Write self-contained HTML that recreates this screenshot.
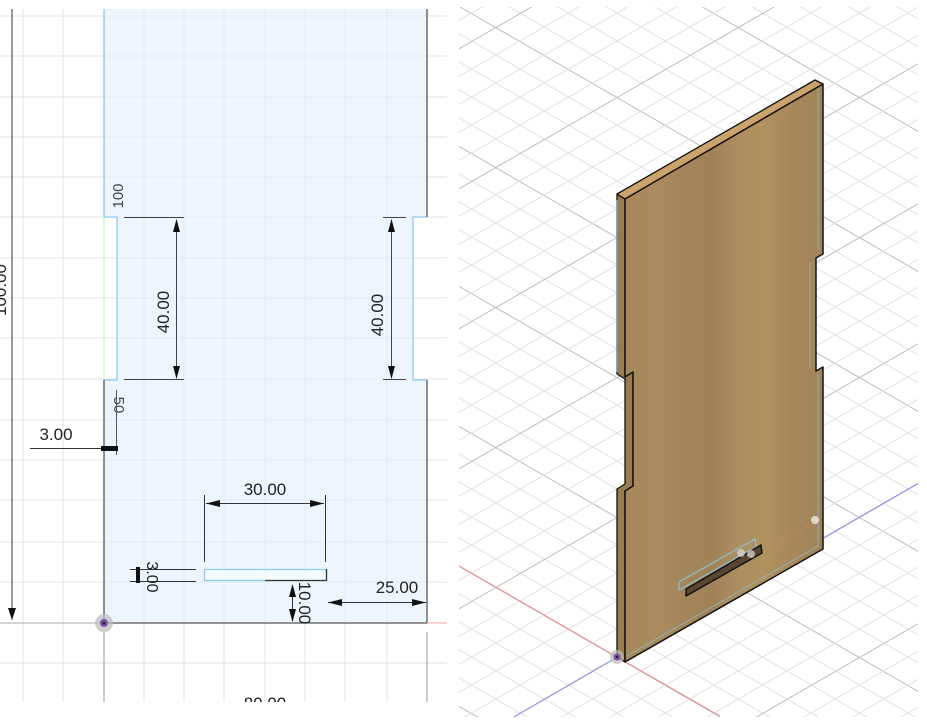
<!DOCTYPE html>
<html><head><meta charset="utf-8"><style>
html,body{margin:0;padding:0;background:#fff;width:927px;height:727px;overflow:hidden;}
svg{display:block;}
text{font-family:"Liberation Sans",sans-serif;fill:#222;}
</style></head><body>
<svg width="927" height="727" viewBox="0 0 927 727" xmlns="http://www.w3.org/2000/svg">
<defs>
  <linearGradient id="wood" x1="0" x2="1" y1="0" y2="0">
    <stop offset="0" stop-color="#a58759"/>
    <stop offset="0.15" stop-color="#a98b5d"/>
    <stop offset="0.3" stop-color="#a3855a"/>
    <stop offset="0.45" stop-color="#a08256"/>
    <stop offset="0.55" stop-color="#ab8d60"/>
    <stop offset="0.7" stop-color="#b0925f"/>
    <stop offset="0.85" stop-color="#a6885b"/>
    <stop offset="1" stop-color="#a08457"/>
  </linearGradient>
  <pattern id="gA" patternUnits="userSpaceOnUse" width="400" height="121.24" patternTransform="translate(617,657) rotate(30)">
    <line x1="0" y1="0.5" x2="400" y2="0.5" stroke="#bdbdbd" stroke-width="1"/>
    <line x1="0" y1="24.25" x2="400" y2="24.25" stroke="#e0e0e0" stroke-width="1"/>
    <line x1="0" y1="48.5" x2="400" y2="48.5" stroke="#e0e0e0" stroke-width="1"/>
    <line x1="0" y1="72.75" x2="400" y2="72.75" stroke="#e0e0e0" stroke-width="1"/>
    <line x1="0" y1="97" x2="400" y2="97" stroke="#e0e0e0" stroke-width="1"/>
  </pattern>
  <pattern id="gB" patternUnits="userSpaceOnUse" width="400" height="121.24" patternTransform="translate(617,657) rotate(-30)">
    <line x1="0" y1="0.5" x2="400" y2="0.5" stroke="#bdbdbd" stroke-width="1"/>
    <line x1="0" y1="24.25" x2="400" y2="24.25" stroke="#e0e0e0" stroke-width="1"/>
    <line x1="0" y1="48.5" x2="400" y2="48.5" stroke="#e0e0e0" stroke-width="1"/>
    <line x1="0" y1="72.75" x2="400" y2="72.75" stroke="#e0e0e0" stroke-width="1"/>
    <line x1="0" y1="97" x2="400" y2="97" stroke="#e0e0e0" stroke-width="1"/>
  </pattern>
  <clipPath id="rc"><rect x="459" y="7" width="459" height="710"/></clipPath>
</defs>

<!-- LEFT PANEL -->
<g stroke="#e3e3e3" stroke-width="1">
  <line x1="23" y1="9" x2="23" y2="702"/><line x1="63" y1="9" x2="63" y2="702"/>
  <line x1="144" y1="9" x2="144" y2="702"/><line x1="184" y1="9" x2="184" y2="702"/>
  <line x1="224" y1="9" x2="224" y2="702"/><line x1="265" y1="9" x2="265" y2="702"/>
  <line x1="305" y1="9" x2="305" y2="702"/><line x1="345" y1="9" x2="345" y2="702"/>
  <line x1="387" y1="9" x2="387" y2="702"/>
  <line x1="0" y1="16" x2="447" y2="16"/><line x1="0" y1="56" x2="447" y2="56"/>
  <line x1="0" y1="97" x2="447" y2="97"/><line x1="0" y1="137" x2="447" y2="137"/>
  <line x1="0" y1="177" x2="447" y2="177"/><line x1="0" y1="217" x2="447" y2="217"/>
  <line x1="0" y1="258" x2="447" y2="258"/><line x1="0" y1="298" x2="447" y2="298"/>
  <line x1="0" y1="338" x2="447" y2="338"/><line x1="0" y1="379" x2="447" y2="379"/>
  <line x1="0" y1="420" x2="447" y2="420"/><line x1="0" y1="460" x2="447" y2="460"/>
  <line x1="0" y1="500" x2="447" y2="500"/><line x1="0" y1="542" x2="447" y2="542"/>
  <line x1="0" y1="582" x2="447" y2="582"/><line x1="0" y1="663" x2="447" y2="663"/>
</g>
<path d="M104 9 H427 V217 H413 V380 H427 V623 H104 V380 H117 V217 H104 Z" fill="#e4f1fb" fill-opacity="0.65"/>
<rect x="204.5" y="569.5" width="122" height="11" fill="#fff" fill-opacity="0.5" stroke="#8ccbea" stroke-width="1.2"/>
<line x1="265" y1="580.5" x2="326" y2="580.5" stroke="#333" stroke-width="1.3"/>
<line x1="326.5" y1="569" x2="326.5" y2="581" stroke="#333" stroke-width="1.3"/>
<path d="M104 9 V217 H117 V380 H104" fill="none" stroke="#8ccbea" stroke-width="1.3"/>
<path d="M427 217 H413 V380 H427" fill="none" stroke="#8ccbea" stroke-width="1.3"/>
<line x1="104" y1="217" x2="104" y2="380" stroke="#b8f0b0" stroke-width="1"/>
<path d="M427 9 V217 M427 380 V623 H104 V380" fill="none" stroke="#555" stroke-width="1.3"/>
<line x1="104" y1="632" x2="104" y2="702" stroke="#999" stroke-width="1"/>
<line x1="427" y1="632" x2="427" y2="702" stroke="#999" stroke-width="1"/>
<line x1="0" y1="623" x2="104" y2="623" stroke="#aaa" stroke-width="1"/>
<line x1="427" y1="623" x2="447" y2="623" stroke="#f3a0a0" stroke-width="1"/>
<line x1="12" y1="9" x2="12" y2="620" stroke="#333" stroke-width="1"/>
<path d="M8 608 L12 620 L16 608 Z" fill="#111"/>
<text x="2" y="290" font-size="17" transform="rotate(-90 2 290)" text-anchor="middle" dy="4">100.00</text>
<g stroke="#444" stroke-width="1">
  <line x1="124" y1="217.5" x2="184" y2="217.5"/><line x1="124" y1="379.5" x2="184" y2="379.5"/>
  <line x1="176.5" y1="220" x2="176.5" y2="378"/>
  <line x1="383" y1="217.5" x2="406" y2="217.5"/><line x1="383" y1="379.5" x2="406" y2="379.5"/>
  <line x1="391.5" y1="220" x2="391.5" y2="378"/>
</g>
<path d="M173 232 L176.5 219 L180 232 Z M173 366 L176.5 379 L180 366 Z" fill="#111"/>
<path d="M388 232 L391.5 219 L395 232 Z M388 366 L391.5 379 L395 366 Z" fill="#111"/>
<text x="163" y="312" font-size="17" transform="rotate(-90 163 312)" text-anchor="middle" dy="6">40.00</text>
<text x="377" y="315" font-size="17" transform="rotate(-90 377 315)" text-anchor="middle" dy="6">40.00</text>
<text x="118" y="196" font-size="15" transform="rotate(-90 118 196)" text-anchor="middle" dy="5" style="fill:#444">100</text>
<text x="119" y="405" font-size="15" transform="rotate(90 119 405)" text-anchor="middle" dy="5" style="fill:#444">50</text>
<line x1="116.5" y1="390" x2="116.5" y2="455" stroke="#555" stroke-width="1"/>
<text x="56" y="440" font-size="17" text-anchor="middle">3.00</text>
<line x1="30" y1="448.5" x2="118" y2="448.5" stroke="#333" stroke-width="1"/>
<rect x="101" y="446" width="17" height="5" fill="#111"/>
<text x="265" y="495" font-size="17" text-anchor="middle">30.00</text>
<g stroke="#333" stroke-width="1">
  <line x1="204.5" y1="495" x2="204.5" y2="562"/><line x1="325.5" y1="495" x2="325.5" y2="562"/>
  <line x1="206" y1="503.5" x2="324" y2="503.5"/>
  <line x1="130" y1="569.5" x2="196" y2="569.5"/><line x1="130" y1="581.5" x2="196" y2="581.5"/>
  <line x1="292.5" y1="585" x2="292.5" y2="621"/>
  <line x1="328" y1="602.5" x2="426" y2="602.5"/>
</g>
<path d="M206 503.5 L220 500 L220 507 Z M324 503.5 L310 500 L310 507 Z" fill="#111"/>
<path d="M328 602.5 L342 599 L342 606 Z M426 602.5 L412 599 L412 606 Z" fill="#111"/>
<path d="M289 597 L292.5 584 L296 597 Z M289 609 L292.5 622 L296 609 Z" fill="#111"/>
<rect x="136" y="567" width="4" height="16" fill="#111"/>
<text x="152" y="577" font-size="16" transform="rotate(90 152 577)" text-anchor="middle" dy="5">3.00</text>
<text x="305" y="603" font-size="17" transform="rotate(90 305 603)" text-anchor="middle" dy="6">10.00</text>
<text x="397" y="593" font-size="17" text-anchor="middle">25.00</text>
<text x="265" y="709" font-size="17" text-anchor="middle">80.00</text>
<rect x="0" y="702" width="447" height="25" fill="#fff"/>
<rect x="0" y="0" width="447" height="9" fill="#fff"/>
<circle cx="104" cy="623" r="9" fill="#bbb" fill-opacity="0.7"/>
<circle cx="104" cy="623" r="4" fill="#7a4fa8"/>
<circle cx="104" cy="623" r="1.3" fill="#222"/>

<!-- RIGHT PANEL -->
<g clip-path="url(#rc)">
  <rect x="459" y="7" width="459" height="710" fill="#fff"/>
  <rect x="300" y="-200" width="800" height="1100" fill="url(#gA)"/>
  <rect x="300" y="-200" width="800" height="1100" fill="url(#gB)"/>
  <line x1="617" y1="657" x2="300" y2="474" stroke="#f08a8a" stroke-width="1"/>
  <line x1="617" y1="657" x2="720" y2="716" stroke="#f08a8a" stroke-width="1"/>
  <line x1="617" y1="657" x2="1000" y2="436" stroke="#8c8cf0" stroke-width="1"/>
  <line x1="617" y1="657" x2="500" y2="725" stroke="#8c8cf0" stroke-width="1"/>
</g>
<path d="M617 194 L625 199 L625 377 L633 372 L633 486 L625 491 L625 662 L617 657 L617 489 L625 484 L625 379 L617 374 Z" fill="#9a7c50" stroke="#111" stroke-width="1.3" stroke-linejoin="round"/>
<path d="M617 194 L815 80 L823 84 L625 199 Z" fill="#caa46c" stroke="#111" stroke-width="1.3" stroke-linejoin="round"/>
<path d="M625 199 L823 84 L823 254 L816 258 L816 371 L823 367 L823 549 L625 662 L625 491 L633 486 L633 372 L625 377 Z" fill="url(#wood)" stroke="#111" stroke-width="1.5" stroke-linejoin="round"/>
<path d="M617 200 L617 372" stroke="#6aa8c8" stroke-width="1.5"/>
<path d="M818 88 L818 250 M810 262 L810 368 M818 374 L818 546 L627 656" fill="none" stroke="#8fb8c8" stroke-width="1" opacity="0.8"/>
<line x1="764" y1="552" x2="818" y2="521" stroke="#d98a4a" stroke-width="0.8" stroke-dasharray="3 3"/>
<circle cx="815" cy="520" r="4" fill="#eee" opacity="0.8"/>
<path d="M679 590 L679 582 L755 539 L756 547 Z" fill="none" stroke="#8fc0d0" stroke-width="1.2"/>
<path d="M686 596 L686 589 L761 545 L762 553 Z" fill="#5a4630" stroke="#111" stroke-width="1.4" stroke-linejoin="round"/>
<circle cx="741" cy="553" r="4" fill="#ddd" opacity="0.7"/>
<circle cx="751" cy="554" r="4" fill="#ddd" opacity="0.7"/>
<circle cx="617" cy="657" r="7" fill="#bbb" fill-opacity="0.7"/>
<circle cx="617" cy="657" r="3.5" fill="#7a4fa8"/>
<circle cx="617" cy="657" r="1.2" fill="#222"/>
</svg>
</body></html>
